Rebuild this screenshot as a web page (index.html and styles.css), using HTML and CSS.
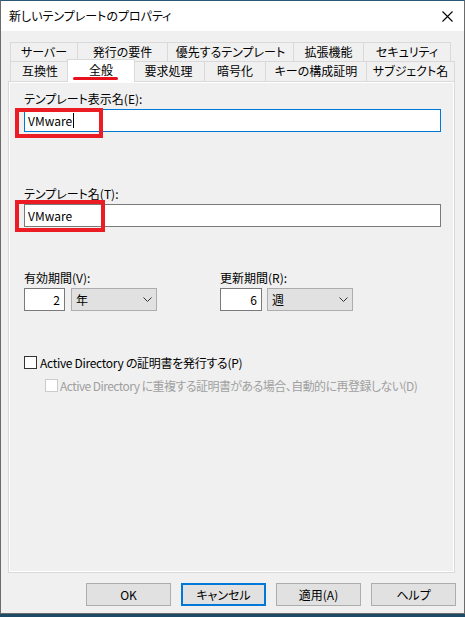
FILE: index.html
```html
<!DOCTYPE html>
<html lang="ja">
<head>
<meta charset="utf-8">
<link rel="stylesheet" href="styles.css">
</head>
<body>
<div class="window">
  <div class="titlebar">
    <span class="title">新しいテンプレートのプロパティ</span>
    <svg class="close" width="11" height="11" viewBox="0 0 11 11"><path d="M0.5 0.5 L10.5 10.5 M10.5 0.5 L0.5 10.5" stroke="#000" stroke-width="1.1" fill="none"/></svg>
  </div>
  <div class="content">
    <div class="tabs">
      <div class="tabrow back">
        <div class="tab">サーバー</div>
        <div class="tab">発行の要件</div>
        <div class="tab">優先するテンプレート</div>
        <div class="tab">拡張機能</div>
        <div class="tab">セキュリティ</div>
      </div>
      <div class="tabrow front">
        <div class="tab">互換性</div>
        <div class="tab selected">全般<span class="underline"></span></div>
        <div class="tab">要求処理</div>
        <div class="tab">暗号化</div>
        <div class="tab">キーの構成証明</div>
        <div class="tab">サブジェクト名</div>
      </div>
    </div>
    <div class="panel">
      <div class="label first">テンプレート表示名(E):</div>
      <div class="textbox focused"><span class="val">VMware</span><span class="caret"></span><span class="redbox box1"></span></div>
      <div class="label second">テンプレート名(T):</div>
      <div class="textbox"><span class="val">VMware</span><span class="redbox box2"></span></div>
      <div class="periods">
        <div class="period">
          <div class="label">有効期間(V):</div>
          <div class="pctrl">
            <div class="num">2</div>
            <div class="combo"><span>年</span><svg width="9" height="5" viewBox="0 0 9 5"><path d="M0.5 0.5 L4.5 4.5 L8.5 0.5" stroke="#333" fill="none"/></svg></div>
          </div>
        </div>
        <div class="period">
          <div class="label">更新期間(R):</div>
          <div class="pctrl">
            <div class="num">6</div>
            <div class="combo"><span>週</span><svg width="9" height="5" viewBox="0 0 9 5"><path d="M0.5 0.5 L4.5 4.5 L8.5 0.5" stroke="#333" fill="none"/></svg></div>
          </div>
        </div>
      </div>
      <div class="check c1"><span class="box"></span><span class="ctext">Active Directory の証明書を発行する(P)</span></div>
      <div class="check c2 disabled"><span class="box"></span><span class="ctext">Active Directory に重複する証明書がある場合、自動的に再登録しない(D)</span></div>
    </div>
    <div class="buttons">
      <div class="btn">OK</div>
      <div class="btn default">キャンセル</div>
      <div class="btn">適用(A)</div>
      <div class="btn">ヘルプ</div>
    </div>
  </div>
</div>
</body>
</html>
```
FILE: styles.css
```css
* { box-sizing: border-box; }
html { background: #1d4a66; }
body {
  margin: 0;
  width: 465px;
  height: 617px;
  overflow: hidden;
  font-family: "Noto Sans CJK JP", "Noto Sans", sans-serif;
  font-size: 12px;
  font-feature-settings: "palt";
  color: #000;
}
.window {
  width: 465px;
  height: 614px;
  border: 1px solid #6b6b6b;
  border-top-color: #2c5875;
  background: #f0f0f0;
  display: flex;
  flex-direction: column;
}
.titlebar {
  height: 30px;
  flex: none;
  background: #fff;
  display: flex;
  align-items: center;
  justify-content: space-between;
  padding: 0 11px 0 8px;
}
.title { line-height: 16px; }
.close { display: block; }
.content {
  flex: 1;
  display: flex;
  flex-direction: column;
  padding: 11px 9px 7px 7px;
}
.tabs { flex: none; }
.tabrow { display: flex; margin-left: 2px; }
.tabrow.back { height: 19px; }
.tabrow.front { height: 20px; }
.tab {
  border: 1px solid #d9d9d9;
  border-bottom: none;
  border-right: none;
  background: #f0f0f0;
  text-align: center;
  line-height: 18px;
  white-space: nowrap;
}
.tab:last-child { border-right: 1px solid #d9d9d9; }
.back .tab:nth-child(1) { width: 67px; }
.back .tab:nth-child(2) { width: 90px; }
.back .tab:nth-child(3) { width: 126px; }
.back .tab:nth-child(4) { width: 70px; }
.back .tab:nth-child(5) { width: 88px; }
.front .tab:nth-child(1) { width: 59px; }
.front .tab:nth-child(2) { width: 68px; }
.front .tab:nth-child(3) { width: 71px; }
.front .tab:nth-child(4) { width: 61px; }
.front .tab:nth-child(5) { width: 101px; }
.front .tab:nth-child(6) { width: 89px; }
.front .tab:nth-child(3) { border-left: none; }
.tab.selected {
  position: relative;
  z-index: 1;
  margin: -2px -2px 0 -2px;
  height: 23px;
  background: #fff;
  border-right: 1px solid #d9d9d9;
  line-height: 20px;
  padding-bottom: 3px;
}
.underline {
  position: absolute;
  left: 5px;
  top: 17px;
  width: 45px;
  height: 3px;
  border-radius: 2px;
  background: #e8121c;
}
.panel {
  flex: 1;
  border: 1px solid #d9d9d9;
  box-shadow: inset 0 0 0 1px #fff;
  padding: 9px 13px 0 15px;
  display: flex;
  flex-direction: column;
}
.label { line-height: 15px; white-space: nowrap; }
.label.second { margin-top: 54px; }
.textbox {
  position: relative;
  margin-top: 3px;
  height: 23px;
  border: 1px solid #7a7a7a;
  background: #fff;
  display: flex;
  align-items: center;
  padding-left: 3px;
}
.textbox.focused { border-color: #0078d7; }
.val { line-height: 15px; }
.caret {
  width: 1px;
  height: 15px;
  background: #000;
  margin-left: 1px;
}
.redbox {
  position: absolute;
  border: 4px solid #ec1c24;
}
.box1 { left: -10px; top: -2px; width: 88px; height: 30px; }
.box2 { left: -10px; top: -5px; width: 90px; height: 32px; }
.periods {
  margin-top: 43px;
  display: grid;
  grid-template-columns: 196px 1fr;
}
.pctrl {
  margin-top: 3px;
  display: flex;
  gap: 5px;
}
.num {
  width: 42px;
  height: 23px;
  border: 1px solid #7a7a7a;
  background: #fff;
  text-align: right;
  padding-right: 4px;
  line-height: 21px;
}
.period:first-child .num { width: 41px; margin-right: 1px; }
.combo {
  width: 86px;
  height: 23px;
  border: 1px solid #adadad;
  background: #e1e1e1;
  display: flex;
  align-items: center;
  justify-content: space-between;
  padding: 0 4px 0 4px;
  line-height: 21px;
}
.combo svg { display: block; margin-right: 0; }
.check {
  display: flex;
  align-items: center;
  line-height: 15px;
  white-space: nowrap;
}
.check .box {
  width: 13px;
  height: 13px;
  border: 1px solid #333;
  background: #fff;
  margin-right: 3px;
  flex: none;
}
.c1 .ctext { letter-spacing: -0.3px; }
.c2 .ctext { letter-spacing: -0.55px; }
.c1 { margin-top: 44px; }
.c2 { margin-top: 8px; margin-left: 21px; }
.disabled { color: #a0a0a0; }
.disabled .box { border-color: #cccccc; margin-right: 2px; }
.buttons {
  flex: none;
  margin-top: 10px;
  margin-right: -1px;
  display: flex;
  justify-content: flex-end;
  gap: 10px;
}
.btn {
  width: 85px;
  height: 23px;
  border: 1px solid #adadad;
  background: #e1e1e1;
  text-align: center;
  line-height: 21px;
}
.btn.default { border: 2px solid #0078d7; line-height: 19px; }
```
